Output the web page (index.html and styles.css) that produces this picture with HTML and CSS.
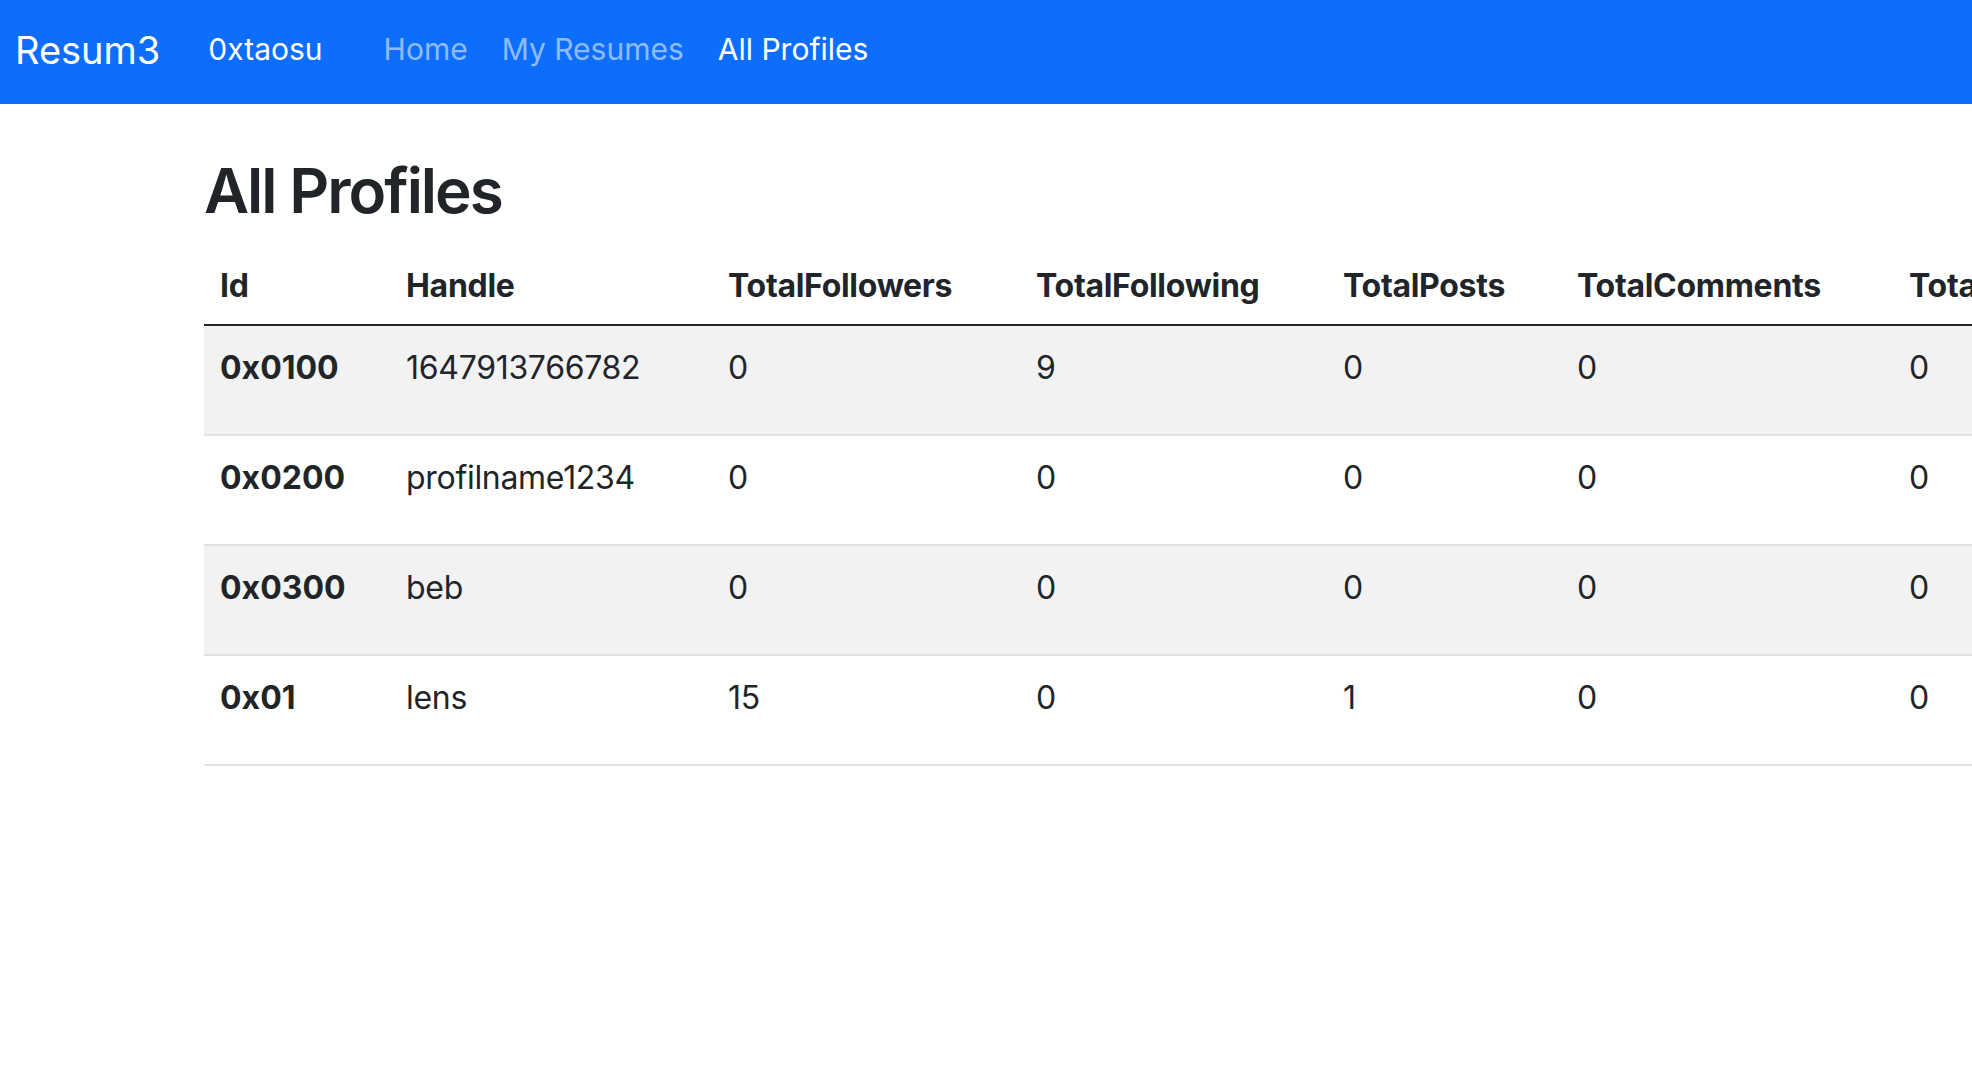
FILE: index.html
```html
<!DOCTYPE html>
<html lang="en">
<head>
<meta charset="utf-8">
<title>Resum3 - All Profiles</title>
<link rel="stylesheet" href="styles.css">
</head>
<body>
<nav class="navbar">
  <a class="brand" href="#">Resum3</a>
  <span class="user">0xtaosu</span>
  <ul class="nav">
    <li><a class="nav-link" href="#">Home</a></li>
    <li><a class="nav-link" href="#">My Resumes</a></li>
    <li><a class="nav-link active" href="#">All Profiles</a></li>
  </ul>
</nav>
<main class="content">
  <h1 class="title">All Profiles</h1>
  <table class="table">
    <colgroup>
      <col class="c-id"><col class="c-handle"><col class="c-followers"><col class="c-following"><col class="c-posts"><col class="c-comments"><col class="c-mirrors"><col class="c-pubs"><col class="c-collects">
    </colgroup>
    <thead>
      <tr>
        <th>Id</th><th>Handle</th><th>TotalFollowers</th><th>TotalFollowing</th><th>TotalPosts</th><th>TotalComments</th><th>TotalMirrors</th><th>TotalPublications</th><th>TotalCollects</th>
      </tr>
    </thead>
    <tbody>
      <tr class="odd">
        <th>0x0100</th><td>1647913766782</td><td>0</td><td>9</td><td>0</td><td>0</td><td>0</td><td>0</td><td>0</td>
      </tr>
      <tr>
        <th>0x0200</th><td>profilname1234</td><td>0</td><td>0</td><td>0</td><td>0</td><td>0</td><td>0</td><td>0</td>
      </tr>
      <tr class="odd">
        <th>0x0300</th><td>beb</td><td>0</td><td>0</td><td>0</td><td>0</td><td>0</td><td>0</td><td>0</td>
      </tr>
      <tr>
        <th>0x01</th><td>lens</td><td>15</td><td>0</td><td>1</td><td>0</td><td>0</td><td>1</td><td>0</td>
      </tr>
    </tbody>
  </table>
</main>
</body>
</html>
```
FILE: styles.css
```css
html {
  overflow: hidden;
}
body {
  margin: 0;
  font-family: Inter, "Liberation Sans", sans-serif;
  color: #212529;
  background: #fff;
}
a {
  text-decoration: none;
}
.navbar {
  display: flex;
  align-items: center;
  height: 104px;
  padding-left: 15px;
  background: #0d6efd;
  box-sizing: border-box;
}
.brand {
  color: #fff;
  font-size: 38px;
  line-height: 1.5;
  margin-right: 48px;
  margin-top: -4px;
}
.user {
  color: #fff;
  font-size: 30px;
  line-height: 48px;
  margin-right: 44px;
  margin-top: -6px;
}
.nav {
  display: flex;
  list-style: none;
  margin: -6px 0 0;
  padding: 0;
}
.nav-link {
  display: block;
  padding: 0 17px;
  font-size: 30px;
  line-height: 48px;
  color: rgba(255, 255, 255, 0.55);
}
.nav-link.active {
  color: #fff;
}
.content {
  padding: 50px 0 0 204px;
}
.title {
  margin: 0 0 16px;
  font-size: 62px;
  font-weight: 600;
  line-height: 74px;
  letter-spacing: -2px;
}
.table {
  border-collapse: collapse;
  table-layout: fixed;
  width: 2559px;
  font-size: 32px;
  line-height: 48px;
}
.c-id { width: 186px; }
.c-handle { width: 322px; }
.c-followers { width: 308px; }
.c-following { width: 307px; }
.c-posts { width: 234px; }
.c-comments { width: 332px; }
.c-mirrors { width: 270px; }
.c-pubs { width: 330px; }
.c-collects { width: 270px; }
.table th,
.table td {
  text-align: left;
  white-space: nowrap;
  vertical-align: top;
}
.table thead th {
  padding: 18px 16px 14px;
  font-weight: 700;
  letter-spacing: -0.3px;
  border-bottom: 2px solid #212529;
}
.table tbody th,
.table tbody td {
  padding: 18px 16px 42px;
  border-bottom: 2px solid #dee2e6;
}
.table tbody th {
  font-weight: 700;
}
.table tbody td {
  font-weight: 400;
  letter-spacing: -0.3px;
}
.table tbody tr.odd {
  background: #f2f2f2;
}
```
